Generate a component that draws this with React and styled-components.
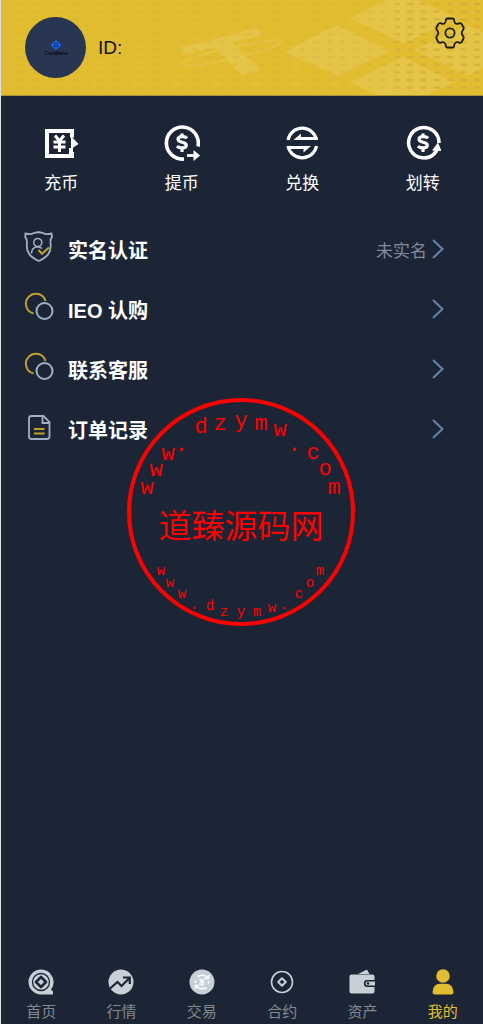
import React from 'react';
import styled, { createGlobalStyle } from 'styled-components';

const GlobalStyle = createGlobalStyle`
  * {
    box-sizing: border-box;
  }

  body {
    margin: 0;
    background: #1c2536;
    font-family: 'Liberation Sans', 'Noto Sans CJK SC', sans-serif;
  }
`;

const Page = styled.div`
  position: relative;
  display: flex;
  flex-direction: column;
  min-height: 100vh;
  border-left: 1px solid #dcdfe3;
  background: #1c2536;
  color: #fff;
`;

const Header = styled.header`
  position: relative;
  display: flex;
  align-items: flex-start;
  gap: 12px;
  height: 96px;
  padding: 17px 18px 0 24px;
  border-bottom: 1px solid #a8933a;
  background: #e2bd30;
  overflow: hidden;
`;

const HeaderArt = styled.svg`
  position: absolute;
  top: 0;
  right: 0;
  width: 482px;
  height: 96px;
`;

const Avatar = styled.div`
  position: relative;
  display: flex;
  flex-direction: column;
  align-items: center;
  justify-content: center;
  width: 61px;
  height: 61px;
  border-radius: 50%;
  background: #293651;
`;

const UserId = styled.p`
  position: relative;
  flex: 1;
  margin: 0;
  line-height: 62px;
  font-size: 19px;
  color: #111;
`;

const SettingsButton = styled.button`
  position: relative;
  display: flex;
  padding: 0;
  border: 0;
  background: none;
  color: #1d1d14;
  cursor: pointer;
`;

const Actions = styled.nav`
  display: grid;
  grid-template-columns: repeat(4, 1fr);
  padding: 29px 0 23px;
`;

const ActionLink = styled.a`
  display: flex;
  flex-direction: column;
  align-items: center;
  gap: 11px;
  font-size: 17px;
  line-height: 24px;
  color: #fff;
  text-decoration: none;
`;

const Menu = styled.ul`
  margin: 0;
  padding: 0 34px 0 22px;
  list-style: none;
`;

const MenuLink = styled.a`
  display: flex;
  align-items: center;
  height: 60px;
  color: #fff;
  text-decoration: none;
`;

const MenuIcon = styled.svg`
  width: 32px;
  height: 32px;
  margin-bottom: 5px;
  fill: none;
  stroke: #9fb0c6;
  stroke-width: 2;
`;

const MenuTitle = styled.span`
  flex: 1;
  margin-left: 13px;
  font-size: 20px;
  font-weight: 700;
`;

const MenuNote = styled.span`
  font-size: 17px;
  color: #7f8c9d;
`;

const Chevron = styled.svg`
  width: 22px;
  height: 22px;
  fill: none;
  stroke: #6583ad;
  stroke-width: 2;
`;

const Stamp = styled.svg`
  position: absolute;
  top: 397px;
  left: 50%;
  width: 230px;
  height: 230px;
  margin-left: -116px;
  fill: #f00;
  text-anchor: middle;
  font-family: 'Liberation Mono', monospace;
  pointer-events: none;
`;

const TabBar = styled.nav`
  display: grid;
  grid-template-columns: repeat(6, 1fr);
  margin-top: auto;
  padding-bottom: 1px;
`;

const Tab = styled.a`
  display: flex;
  flex-direction: column;
  align-items: center;
  gap: 6px;
  font-size: 15px;
  line-height: 22px;
  color: ${(props) => (props.$active ? '#e2bd30' : '#85898f')};
  text-decoration: none;

  svg {
    color: ${(props) => (props.$active ? '#e2bd30' : '#c7cfd7')};
  }
`;

const Dollar = () => (
  <>
    <path d="M23 13.2 C21.5 11.2 14 10.6 14 14.3 C14 18 22.3 16.6 22.3 20.2 C22.3 24 15 23.4 13 21.2" fill="none" stroke="currentColor" strokeWidth="3.2" />
    <path d="M18 8.5 V13 M18 22 V27" stroke="currentColor" strokeWidth="3.2" />
  </>
);

const DepositIcon = () => (
  <svg width="36" height="36" viewBox="0 0 36 36" fill="none" stroke="currentColor">
    <path d="M29 12.5 V6 H4 V31 H29 V27" strokeWidth="4" />
    <path d="M28 11 L35.5 19 L28 24 Z" fill="currentColor" stroke="none" />
    <path d="M28 23 V31" strokeWidth="4" />
    <path d="M12 10.5 L16.5 16 L21 10.5 M16.5 16 V27 M10.500 17 H22.5 M10.5 22 H22.5" strokeWidth="3" />
  </svg>
);

const WithdrawIcon = () => (
  <svg width="36" height="36" viewBox="0 0 36 36" fill="none" stroke="currentColor">
    <path d="M34 21.5 A16 16 0 1 0 20 34" strokeWidth="3.6" />
    <Dollar />
    <path d="M23 30.5 H31" strokeWidth="2.8" />
    <path d="M29.5 25 L36 30.5 L29.5 36 Z" fill="currentColor" stroke="none" />
  </svg>
);

const SwapIcon = () => (
  <svg width="36" height="36" viewBox="0 0 36 36" fill="none" stroke="currentColor">
    <path d="M4 15 A14.500 14.500 0 0 1 32.5 15 M32.5 21 A14.500 14.500 0 0 1 4 21" strokeWidth="3.2" />
    <path d="M9.5 15 L17 8.5 V12 H33.5 V15 Z M27 21 L19.500 27.5 V24 H3 V21 Z" fill="currentColor" stroke="none" />
  </svg>
);

const TransferIcon = () => (
  <svg width="36" height="36" viewBox="0 0 36 36" fill="none" stroke="currentColor">
    <path d="M34 18 A15.200 15.200 0 1 0 30 28" strokeWidth="3.5" />
    <Dollar />
    <path d="M33 17.5 L36.500 26 L27 25.5 Z" fill="currentColor" stroke="none" />
    <path d="M29 29 Q32 26 32.5 23" strokeWidth="3.5" />
  </svg>
);

const RingsIcon = () => (
  <MenuIcon viewBox="0 0 32 32">
    <path d="M10.5 22.500 A10 10 0 1 1 22.5 10" stroke="#c09f2d" />
    <circle cx="21.5" cy="20" r="8" />
  </MenuIcon>
);

const VerifyIcon = () => (
  <MenuIcon viewBox="1 1 32 32">
    <path d="M3.5 3.5 Q9 4.8 12 3 Q16.5 1.5 21 3 Q24 4.8 29.5 3.5 L30 7 Q28 9 28.600 14 C29.5 23 25 27 16.800 31 C8.5 27 4 23 4.9 14 Q5.3 9 3.2 7 Z" strokeWidth="1.8" />
    <circle cx="15.800" cy="12.5" r="4" strokeWidth="1.6" />
    <path d="M9.5 23.5 C9.5 19 12 17 15.5 16.7 Q18 16.7 20 18.5" strokeWidth="1.6" />
    <path d="M16.5 20 L20 23.8 L27 17.5" stroke="#c09f2d" />
  </MenuIcon>
);

const OrderIcon = () => (
  <MenuIcon viewBox="1 0 32 32">
    <path d="M9.5 5 H21.5 L27.5 11 V25.5 Q27.5 28 25 28 H9.5 Q7 28 7 25.5 V7.5 Q7 5 9.5 5 Z M20.5 5.5 V12 H27" strokeWidth="1.8" />
    <path d="M12 18 H22.5 M12 22.5 H22.5" stroke="#c09f2d" />
  </MenuIcon>
);

const HomeTabIcon = () => (
  <svg width="26" height="26" viewBox="0 0 26 26">
    <path d="M13 0.5 A12.5 12.5 0 1 0 13 25.5 H25 V22.5 L23 20.5 A12.5 12.5 0 0 0 13 0.5 Z" fill="currentColor" />
    <circle cx="13" cy="13" r="8.5" fill="none" stroke="#1c2536" strokeWidth="1.3" />
    <path d="M13 8 L18 13 L13 18 L8 13 Z" fill="none" stroke="#1c2536" strokeWidth="2.6" strokeLinejoin="round" />
  </svg>
);

const MarketTabIcon = () => (
  <svg width="26" height="26" viewBox="0 0 26 26">
    <circle cx="13" cy="13" r="12.5" fill="currentColor" />
    <path d="M2 19.5 L9.5 13 L13.5 17 L21 9.5 M15 8.5 H21.8 V15" fill="none" stroke="#1c2536" strokeWidth="2.2" />
  </svg>
);

const TradeTabIcon = () => (
  <svg width="26" height="26" viewBox="0 0 26 26">
    <circle cx="13" cy="13" r="12.5" fill="currentColor" />
    <g fill="none" stroke="#fff" strokeWidth="1.6">
      <path d="M8.5 7.5 Q14 4.5 18.5 8.5 M19.5 6 V9.500 H16 M17.5 18.5 Q12 21.5 7.5 17.5 M6.5 20 V16.5 H10" />
      <path d="M10.5 9.5 L13 12.5 L15.5 9.5 M13 12.5 V17.5 M10.5 13 H15.5 M10.5 15.2 H15.5" strokeWidth="1.2" />
      <path d="M6.5 14 V11.5 M19.5 12 V14.5" />
    </g>
  </svg>
);

const ContractTabIcon = () => (
  <svg width="26" height="26" viewBox="0 0 26 26" fill="none" stroke="currentColor">
    <circle cx="13" cy="13" r="10.5" strokeWidth="1.6" />
    <path d="M13 9.3 L16.8 13 L13 16.7 L9.2 13 Z" strokeWidth="2" strokeLinejoin="round" />
  </svg>
);

const AssetTabIcon = () => (
  <svg width="26" height="26" viewBox="0 0 26 26" fill="currentColor">
    <path d="M9 5 L17 1 Q18 0.5 18.5 1.5 L20.5 5 Z" />
    <path d="M2.5 5.500 H23.5 Q25.5 5.5 25.5 7.500 V11 H18 Q15 11 15 14 V15 Q15 18 18 18 H25.5 V22.5 Q25.5 24.5 23.5 24.5 H2.5 Q0.5 24.5 0.5 22.5 V7.5 Q0.5 5.5 2.5 5.5 Z" />
    <path d="M18.5 12.5 H26 V16.5 H18.5 Q16.5 16.5 16.5 14.5 Q16.5 12.5 18.5 12.5 Z" />
    <circle cx="19" cy="14.5" r="1.3" fill="#1c2536" />
  </svg>
);

const MineTabIcon = () => (
  <svg width="26" height="26" viewBox="0 0 26 26" fill="currentColor">
    <circle cx="13" cy="7" r="6.8" />
    <path d="M2.5 23 Q3 15 10 14.8 H16 Q23 15 23.5 23 Q23.5 25.5 21 25.5 H5 Q2.5 25.5 2.5 23 Z" />
  </svg>
);

const actions = [
  { label: '充币', Icon: DepositIcon },
  { label: '提币', Icon: WithdrawIcon },
  { label: '兑换', Icon: SwapIcon },
  { label: '划转', Icon: TransferIcon },
];

const menu = [
  { label: '实名认证', Icon: VerifyIcon, note: '未实名' },
  { label: 'IEO 认购', Icon: RingsIcon },
  { label: '联系客服', Icon: RingsIcon },
  { label: '订单记录', Icon: OrderIcon },
];

const tabs = [
  { label: '首页', Icon: HomeTabIcon },
  { label: '行情', Icon: MarketTabIcon },
  { label: '交易', Icon: TradeTabIcon },
  { label: '合约', Icon: ContractTabIcon },
  { label: '资产', Icon: AssetTabIcon },
  { label: '我的', Icon: MineTabIcon, active: true },
];

// [letter, x, baseline]
const topArc = [
  ['w', 21, 97], ['w', 30, 79], ['w', 42, 63], ['.', 55, 54], ['d', 75, 36],
  ['z', 94, 33], ['y', 115, 30], ['m', 135, 33], ['w', 154, 39], ['.', 168, 54],
  ['c', 187, 62], ['o', 199, 78], ['m', 208, 97],
];

const bottomArc = [
  ['w', 35, 178], ['w', 44, 190], ['w', 56, 201], ['.', 68, 212], ['d', 84, 213],
  ['z', 98, 219], ['y', 115, 219], ['m', 131, 219], ['w', 146, 215], ['.', 158, 212],
  ['c', 173, 201], ['o', 184, 190], ['m', 194, 178],
];

const App = () => {
  return (
    <>
      <GlobalStyle />
      <Page>
        <Header>
          <HeaderArt viewBox="0 0 482 96" aria-hidden="true">
            <defs>
              <pattern id="dots" width="13.4" height="7.6" patternUnits="userSpaceOnUse">
                <ellipse cx="7" cy="4" rx="3.5" ry="1.3" fill="#cbab38" />
              </pattern>
            </defs>
            <g fill="#e5c84f" opacity="0.75">
              <path d="M283 51 L336 25 L389 51 L336 76 Z" />
              <path d="M349 18 L402 -8 L455 18 L402 44 Z" />
              <path d="M349 82 L402 57 L453 82 L402 108 Z" />
              <path d="M413 50 L466 25 L519 50 L466 76 Z" />
              <path d="M178 48 L256 28 L261 35 L232 42 L235 46 L259 70 L241 75 L214 48 L184 54 Z" />
            </g>
            <ellipse cx="231" cy="53" rx="50" ry="6" transform="rotate(-13 231 53)" fill="none" stroke="#e5c84f" strokeWidth="2" opacity="0.6" />
            <rect width="482" height="92" fill="url(#dots)" opacity="0.25" />
            <rect x="395" width="87" height="92" fill="url(#dots)" opacity="0.5" />
          </HeaderArt>
          <Avatar>
            <svg width="24" height="18" viewBox="0 0 24 18" aria-label="CoinBene">
              <path d="M12 1 L17.5 6 L12 11 L6.5 6 Z" fill="#1764f0" />
              <rect x="10.5" y="4.5" width="3" height="3" fill="none" stroke="#14306f" />
              <text x="12" y="16" textAnchor="middle" fontSize="5" fontWeight="700" fill="#080c16">CoinBene</text>
            </svg>
          </Avatar>
          <UserId>ID:</UserId>
          <SettingsButton type="button" aria-label="设置">
            <svg width="30" height="32" viewBox="0 0 30 32" fill="none" stroke="currentColor" strokeWidth="1.8" strokeLinejoin="round">
              <path d="M12 1.5 H18 Q18.800 1.5 19 2.5 L19.5 5 Q20.5 7.500 23 6.8 L24.5 6.200 Q26 5.8 27 7.5 L28.5 10.5 Q29 12 28 13 Q25.500 16 28 19 Q29 20 28.5 21.5 L27 24.5 Q26 26.2 24.5 25.8 L23 25.2 Q20.5 24.5 19.5 27 L19 29.5 Q18.8 30.5 18 30.5 H12 Q11.2 30.5 11 29.5 L10.5 27 Q9.5 24.5 7 25.2 L5.5 25.8 Q4 26.2 3 24.5 L1.5 21.5 Q1 20 2 19 Q4.5 16 2 13 Q1 12 1.5 10.5 L3 7.5 Q4 5.8 5.5 6.2 L7 6.8 Q9.5 7.5 10.5 5 L11 2.5 Q11.2 1.5 12 1.5 Z" />
              <circle cx="15" cy="16" r="4.6" />
            </svg>
          </SettingsButton>
        </Header>

        <Actions>
          {actions.map(({ label, Icon }) => (
            <ActionLink href="#" key={label}>
              <Icon />
              {label}
            </ActionLink>
          ))}
        </Actions>

        <Menu>
          {menu.map(({ label, Icon, note }) => (
            <li key={label}>
              <MenuLink href="#">
                <Icon />
                <MenuTitle>{label}</MenuTitle>
                {note && <MenuNote>{note}</MenuNote>}
                <Chevron viewBox="0 0 22 22">
                  <path d="M6 2 L15.5 11 L6 20" />
                </Chevron>
              </MenuLink>
            </li>
          ))}
        </Menu>

        <Stamp viewBox="0 0 230 230">
          <circle cx="115" cy="115" r="112" fill="none" stroke="#f00" strokeWidth="4" />
          {topArc.map(([letter, x, y]) => (
            <text key={x} x={x} y={y} fontSize="22">{letter}</text>
          ))}
          <text x="115" y="141" fontSize="33" fontFamily="'Noto Sans CJK SC', sans-serif">道臻源码网</text>
          {bottomArc.map(([letter, x, y]) => (
            <text key={x} x={x} y={y} fontSize="14">{letter}</text>
          ))}
        </Stamp>

        <TabBar>
          {tabs.map(({ label, Icon, active }) => (
            <Tab href="#" key={label} $active={active}>
              <Icon />
              {label}
            </Tab>
          ))}
        </TabBar>
      </Page>
    </>
  );
};

export default App;
